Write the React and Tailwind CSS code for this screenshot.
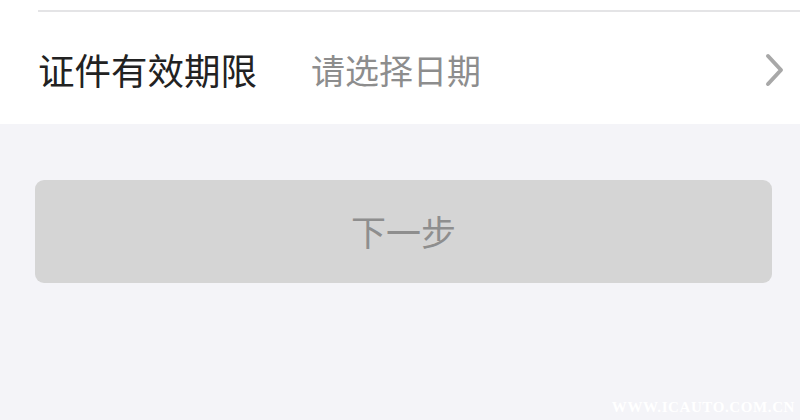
import React from "react";

export default function App() {
  return (
    <div
      className="relative w-[800px] h-[420px] overflow-hidden bg-[#f4f4f8]"
      style={{ fontFamily: '"Noto Sans CJK SC", "Noto Sans", sans-serif' }}
    >
      {/* Form row */}
      <div className="bg-white h-[124px] pl-[38px]">
        <div className="h-[12px] border-b-2 border-[#e4e4e6]" />
        <div className="flex items-center h-[112px] pr-[15px] pt-[4px]">
          <span className="w-[273px] text-[36.5px] leading-none text-[#222222]">证件有效期限</span>
          <span className="flex-1 text-[34px] leading-none text-[#8d8d8d]">请选择日期</span>
          <svg width="20" height="34" viewBox="0 0 20 34" fill="none">
            <path d="M3 3 L16 17 L3 31" stroke="#a8a8a8" strokeWidth="4" strokeLinecap="round" strokeLinejoin="round" />
          </svg>
        </div>
      </div>

      {/* Next button */}
      <div className="pl-[35px] pr-[28px] pt-[56px]">
        <button className="w-full h-[103px] rounded-[9px] bg-[#d5d5d5] text-[35px] text-[#8e8e8e] flex items-center justify-center">
          下一步
        </button>
      </div>

      {/* Watermark */}
      <div
        className="absolute right-[5px] bottom-[2px] text-[15px] font-bold text-white tracking-[0.6px]"
        style={{ fontFamily: '"Liberation Serif", serif' }}
      >
        WWW.ICAUTO.COM.CN
      </div>
    </div>
  );
}
